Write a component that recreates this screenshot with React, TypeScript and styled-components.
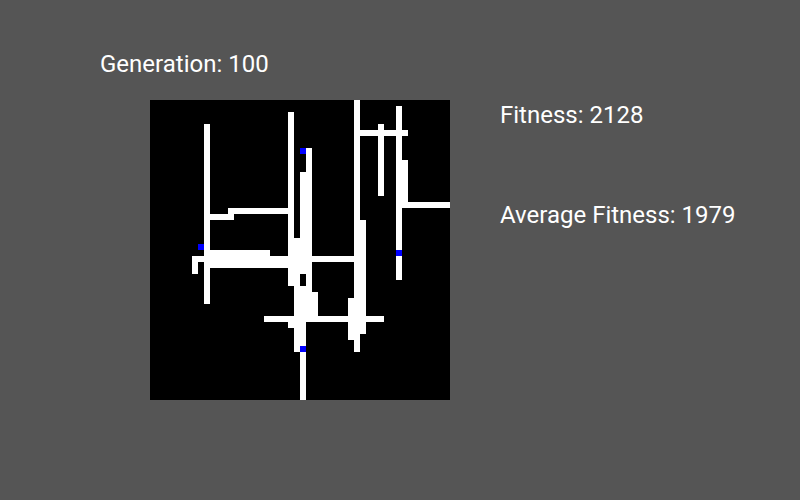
import styled, { createGlobalStyle } from "styled-components";

const GlobalStyle = createGlobalStyle`
  html, body {
    margin: 0;
    padding: 0;
    background: #555555;
  }
  body {
    font-family: Roboto, "Liberation Sans", sans-serif;
    color: #ffffff;
  }
`;

const Screen = styled.div`
  width: 800px;
  height: 500px;
  box-sizing: border-box;
  padding: 52px 0 0 100px;
  display: flex;
  flex-direction: column;
  background: #555555;
`;

const Label = styled.div<{ $gap?: number }>`
  font-size: 24px;
  line-height: 24px;
  white-space: nowrap;
  margin-top: ${({ $gap }) => $gap ?? 0}px;
`;

const Body = styled.div`
  display: flex;
  margin-top: 24px;
  padding-left: 50px;
  gap: 50px;
`;

const Board = styled.svg`
  width: 300px;
  height: 300px;
  display: block;
  background: #000000;
  shape-rendering: crispEdges;
`;

const Stats = styled.div`
  display: flex;
  flex-direction: column;
  padding-top: 3px;
`;

// cells of a 50x50 grid: [col, row, w, h]
const WALLS: [number, number, number, number][] = [
  [9, 4, 1, 30],
  [23, 2, 1, 29],
  [23, 36, 1, 2],
  [24, 23, 1, 19],
  [25, 12, 1, 17],
  [25, 31, 1, 19],
  [26, 8, 1, 29],
  [27, 32, 1, 4],
  [33, 33, 1, 7],
  [34, 0, 1, 42],
  [35, 20, 1, 19],
  [38, 4, 1, 12],
  [41, 1, 1, 29],
  [42, 10, 1, 8],
  [7, 26, 1, 3],
  [35, 5, 8, 1],
  [42, 17, 8, 1],
  [13, 18, 10, 1],
  [10, 19, 4, 1],
  [9, 25, 11, 1],
  [7, 26, 29, 1],
  [9, 27, 18, 1],
  [19, 36, 20, 1],
  [23, 37, 3, 1],
  [33, 39, 2, 1],
];

const HEADS: [number, number][] = [
  [8, 24],
  [25, 8],
  [25, 41],
  [41, 25],
];

const Grid = () => (
  <Board viewBox="0 0 50 50">
    {WALLS.map(([x, y, w, h], i) => (
      <rect key={i} x={x} y={y} width={w} height={h} fill="#ffffff" />
    ))}
    {HEADS.map(([x, y], i) => (
      <rect key={`h${i}`} x={x} y={y} width={1} height={1} fill="#0000ff" />
    ))}
  </Board>
);

export default function App() {
  return (
    <>
      <GlobalStyle />
      <Screen>
        <Label>Generation: 100</Label>
        <Body>
          <Grid />
          <Stats>
            <Label>Fitness: 2128</Label>
            <Label $gap={76}>Average Fitness: 1979</Label>
          </Stats>
        </Body>
      </Screen>
    </>
  );
}
